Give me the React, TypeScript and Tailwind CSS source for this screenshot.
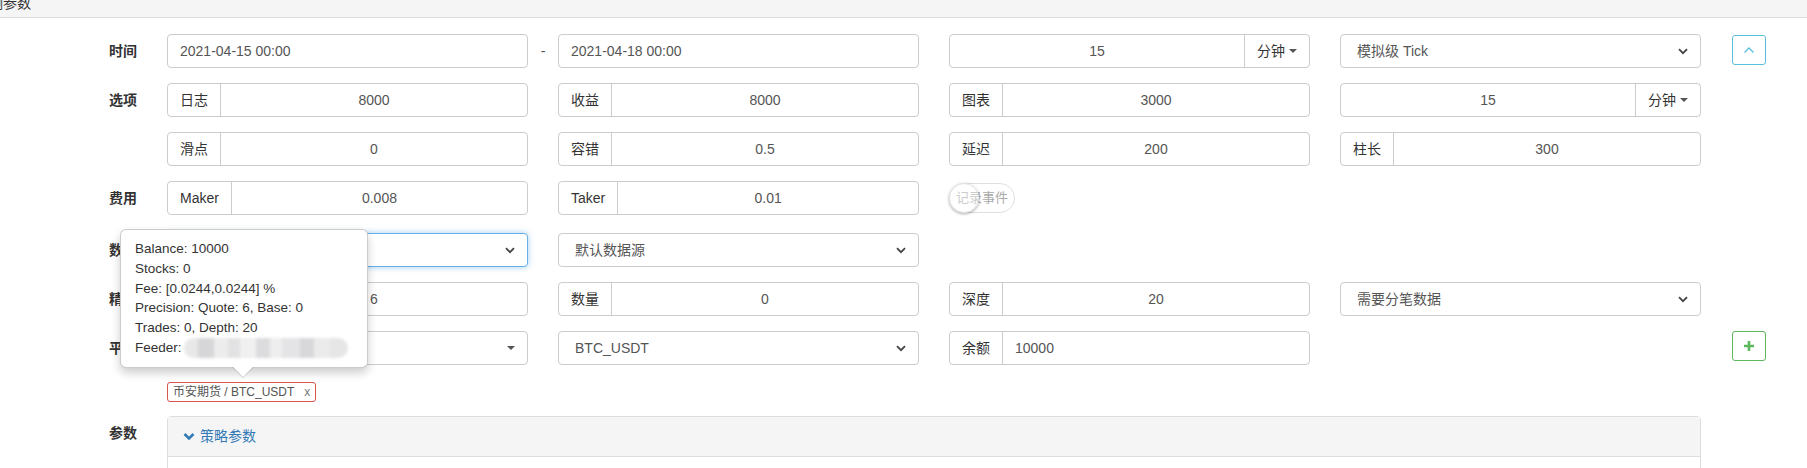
import type { ReactNode } from "react";

const box = "h-[34px] rounded-[4px] border border-[#ccc] bg-white text-[14px] text-[#555]";

function Chevron() {
  return (
    <svg width="10" height="7" viewBox="0 0 10 7" className="shrink-0">
      <path d="M1 1.2 L5 5.2 L9 1.2" fill="none" stroke="#444" strokeWidth="1.8" />
    </svg>
  );
}

function Caret() {
  return <span className="ml-1 inline-block h-0 w-0 border-x-[4px] border-t-[4px] border-x-transparent border-t-[#555]" />;
}

function Plain({ value, center }: { value: string; center?: boolean }) {
  return (
    <div className={`${box} flex items-center px-3 ${center ? "justify-center" : ""}`}>{value}</div>
  );
}

function Addon({ label, value, left }: { label: string; value: string; left?: boolean }) {
  return (
    <div className={`${box} flex overflow-hidden`}>
      <div className="flex items-center border-r border-[#ccc] px-3 text-[#333]">{label}</div>
      <div className={`flex flex-1 items-center px-3 ${left ? "" : "justify-center"}`}>{value}</div>
    </div>
  );
}

function Unit({ value }: { value: string }) {
  return (
    <div className={`${box} flex overflow-hidden`}>
      <div className="flex flex-1 items-center justify-center px-3">{value}</div>
      <div className="flex items-center border-l border-[#ccc] px-3 text-[#333]">
        分钟
        <Caret />
      </div>
    </div>
  );
}

function Select({ value, focus, caret }: { value: string; focus?: boolean; caret?: boolean }) {
  return (
    <div
      className={`flex h-[34px] items-center justify-between rounded-[4px] border bg-white pl-4 pr-3 text-[14px] text-[#555] ${
        focus ? "border-[#66afe9] shadow-[0_0_6px_rgba(102,175,233,0.6)]" : "border-[#ccc]"
      }`}
    >
      <span>{value}</span>
      {caret ? <Caret /> : <Chevron />}
    </div>
  );
}

function Row({ label, children, side, className = "" }: { label?: string; children: ReactNode; side?: ReactNode; className?: string }) {
  return (
    <div className={`flex items-start ${className}`}>
      <div className="w-[167px] shrink-0 pr-[30px] pt-[7px] text-right text-[14px] font-bold leading-[20px] text-[#333]">
        {label}
      </div>
      <div className="grid grid-cols-[361px_361px_361px_361px] gap-x-[30px]">{children}</div>
      {side && <div className="ml-[31px]">{side}</div>}
    </div>
  );
}

export default function App() {
  return (
    <div className="relative h-[468px] w-[1807px] overflow-hidden bg-white font-['Liberation_Sans','Noto_Sans_CJK_SC',sans-serif] text-[14px] text-[#333]">
      <div className="h-[18px] overflow-hidden border-b border-[#ddd] bg-[#f5f5f5]">
        <div className="ml-[-11px] mt-[-7px] text-[14px] leading-[20px] text-[#333]">测参数</div>
      </div>

      <div className="pt-[16px]">
        <div className="mb-[15px] flex items-start">
          <div className="w-[167px] shrink-0 pr-[30px] pt-[7px] text-right text-[14px] font-bold leading-[20px] text-[#333]">
            时间
          </div>
          <div className="w-[361px]">
            <Plain value="2021-04-15 00:00" />
          </div>
          <div className="flex w-[30px] justify-center pt-[7px] leading-[20px] text-[#555]">-</div>
          <div className="w-[361px]">
            <Plain value="2021-04-18 00:00" />
          </div>
          <div className="w-[30px]" />
          <div className="w-[361px]">
            <Unit value="15" />
          </div>
          <div className="w-[30px]" />
          <div className="w-[361px]">
            <Select value="模拟级 Tick" />
          </div>
          <div className="ml-[31px] pt-[1px]">
            <div className="flex h-[30px] w-[34px] items-center justify-center rounded-[3px] border border-[#5bc0de] bg-white">
              <svg width="12" height="8" viewBox="0 0 12 8">
                <path d="M1.5 6.5 L6 2 L10.5 6.5" fill="none" stroke="#5bc0de" strokeWidth="1.4" />
              </svg>
            </div>
          </div>
        </div>

        <Row label="选项" className="mb-[15px]">
          <Addon label="日志" value="8000" />
          <Addon label="收益" value="8000" />
          <Addon label="图表" value="3000" />
          <Unit value="15" />
        </Row>

        <Row className="mb-[15px]">
          <Addon label="滑点" value="0" />
          <Addon label="容错" value="0.5" />
          <Addon label="延迟" value="200" />
          <Addon label="柱长" value="300" />
        </Row>

        <Row label="费用" className="mb-[18px]">
          <Addon label="Maker" value="0.008" />
          <Addon label="Taker" value="0.01" />
          <div className="pt-[2px]">
            <div className="relative flex h-[30px] w-[66px] items-center justify-center rounded-full border border-[#dfdfdf] bg-white text-[13px] text-[#aaa]">
              记录事件
              <div className="absolute left-[-1px] top-[-1px] h-[30px] w-[30px] rounded-full border border-[#e5e5e5] bg-white/40 shadow-[0_1px_3px_rgba(0,0,0,0.35)]" />
            </div>
          </div>
          <div />
        </Row>

        <Row label="数据" className="mb-[15px]">
          <Select value="" focus />
          <Select value="默认数据源" />
          <div />
          <div />
        </Row>

        <Row label="精度" className="mb-[15px]">
          <Addon label="价格" value="6" />
          <Addon label="数量" value="0" />
          <Addon label="深度" value="20" />
          <Select value="需要分笔数据" />
        </Row>

        <Row
          label="平台"
          side={
            <div className="flex h-[30px] w-[34px] items-center justify-center rounded-[3px] border border-[#5cb85c] bg-white">
              <svg width="12" height="12" viewBox="0 0 12 12">
                <path d="M6 1 V11 M1 6 H11" stroke="#5cb85c" strokeWidth="2.6" />
              </svg>
            </div>
          }
        >
          <Select value="" caret />
          <Select value="BTC_USDT" />
          <Addon label="余额" value="10000" left />
          <div />
        </Row>

        <div className="ml-[167px] mt-[16px]">
          <span className="inline-flex h-[20px] items-center rounded-[3px] border border-[#d9534f] px-[5px] text-[12px] text-[#555]">
            币安期货 / BTC_USDT<span className="ml-[10px] text-[#777]">x</span>
          </span>
        </div>

        <div className="mt-[14px] flex items-start">
          <div className="w-[167px] shrink-0 pr-[30px] pt-[7px] text-right text-[14px] font-bold leading-[20px] text-[#333]">
            参数
          </div>
          <div className="w-[1534px] rounded-t-[4px] border border-[#ddd]">
            <div className="flex h-[40px] items-center gap-[5px] border-b border-[#ddd] bg-[#f5f5f5] px-[15px] text-[14px] text-[#337ab7]">
              <svg width="12" height="9" viewBox="0 0 12 9">
                <path d="M1.5 2 L6 6.5 L10.5 2" fill="none" stroke="#337ab7" strokeWidth="2.6" />
              </svg>
              策略参数
            </div>
            <div className="h-[100px] bg-white" />
          </div>
        </div>
      </div>

      <div className="absolute left-[120px] top-[229px] w-[248px] rounded-[6px] border border-[rgba(0,0,0,0.2)] bg-white px-[14px] py-[9px] text-[13.5px] leading-[19.8px] text-[#333] shadow-[0_5px_10px_rgba(0,0,0,0.2)]">
        <div>Balance: 10000</div>
        <div>Stocks: 0</div>
        <div>Fee: [0.0244,0.0244] %</div>
        <div>Precision: Quote: 6, Base: 0</div>
        <div>Trades: 0, Depth: 20</div>
        <div className="flex items-center">
          Feeder:
          <div className="ml-[2px] flex h-[20px] w-[164px] overflow-hidden rounded-full blur-[1.5px]">
            <div className="w-[14px] bg-[#e8e8e8]" />
            <div className="w-[16px] bg-[#d6d6d8]" />
            <div className="w-[14px] bg-[#ececec]" />
            <div className="w-[12px] bg-[#e2e2e4]" />
            <div className="w-[16px] bg-[#f0f0f0]" />
            <div className="w-[14px] bg-[#dcdcde]" />
            <div className="w-[12px] bg-[#eeeeee]" />
            <div className="w-[18px] bg-[#e4e4e6]" />
            <div className="w-[14px] bg-[#d8d8da]" />
            <div className="w-[16px] bg-[#ebebeb]" />
            <div className="flex-1 bg-[#e6e6e6]" />
          </div>
        </div>
        <div className="absolute bottom-[-11px] left-[111px] h-0 w-0 border-x-[11px] border-t-[11px] border-x-transparent border-t-[rgba(0,0,0,0.18)]" />
        <div className="absolute bottom-[-10px] left-[112px] h-0 w-0 border-x-[10px] border-t-[10px] border-x-transparent border-t-white" />
      </div>
    </div>
  );
}
